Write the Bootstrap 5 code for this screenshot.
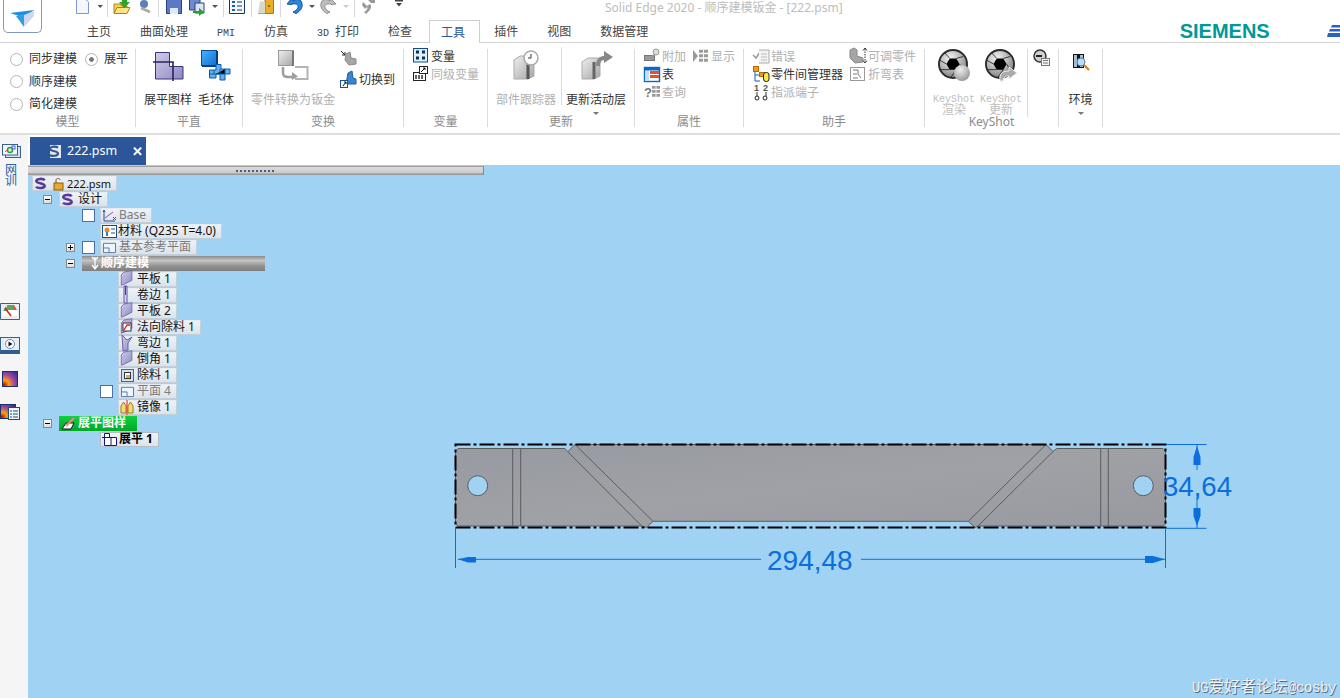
<!DOCTYPE html>
<html lang="zh">
<head>
<meta charset="utf-8">
<title>Solid Edge 2020</title>
<link rel="stylesheet" href="https://cdn.jsdelivr.net/npm/bootstrap@5.3.0/dist/css/bootstrap.min.css">
<style>
html,body{height:698px;overflow:hidden;background:#fff}
body{font-family:"Noto Sans","Noto Sans CJK SC",sans-serif;font-size:12px;line-height:16px;color:#333}
svg{display:block;overflow:visible;flex:none}
.defs{position:absolute;width:0;height:0}
.mono{font-family:"Liberation Mono","Noto Sans CJK SC",monospace;font-size:10px}
.top{height:43px;border-bottom:1px solid #d2d2d2;flex:none}
.appcol{width:72px;padding-left:3px;flex:none}
.appbtn{width:39px;height:33px;border:1px solid #7f98c4;border-top:0;border-radius:0 0 5px 5px;background:#fff}
.qat{height:20px}
.qs{width:1px;height:17px;background:#d9d9d9;flex:none}
.wintitle{margin-left:195px;color:#bdbdbd;line-height:15px;white-space:nowrap}
.rt{flex:none;margin-left:.5px}
.rt .nav-link{padding:0 14.5px;height:23px;line-height:24px;color:#444;font-size:12px;border:0;border-radius:0;background:none;white-space:nowrap}
.rt .nav-link.active{margin-left:2px;padding:0 13.5px 0 11.5px;height:23px;border:1px solid #cfcfcf;border-bottom:0;background:#fff;color:#2b579a;position:relative;z-index:2;box-shadow:0 1px 0 #fff}
.siemens{font-family:"Liberation Sans",sans-serif;font-weight:700;font-size:20px;line-height:22px;color:#009999;margin-left:517px;flex:none}
.menu-ic{margin-left:57px}
.ribbon{height:92px;border-bottom:2px solid #dedede;flex:none}
.rg{margin-top:6px;height:78px;border-right:1px solid #dcdcdc;flex:none;display:flex;flex-direction:column}
.rb{height:65px;display:flex;flex:none}
.gl{height:16px;line-height:16px;text-align:center;color:#8b8b8b;white-space:nowrap;flex:none}
.g1{width:136px}.g2{width:107px}.g3{width:161px}.g4{width:84px}.g5{width:147px}.g6{width:109px}.g7{width:181px}.g8{width:134px}.g9{width:44px}
.g1 .rb{padding-left:10px;flex-direction:column;margin-top:-1px;height:66px}
.g2 .rb,.g3 .rb,.g5 .rb,.g8 .rb{padding-left:8px}
.g4 .rb,.g6 .rb,.g7 .rb{padding-left:9px;flex-direction:column;margin-top:-1px;height:66px}
.g7 .rb{flex-direction:row}
.radio-row{height:22.5px;display:flex;align-items:center;white-space:nowrap;flex:none}
.radio-row .form-check-input{width:13px;height:13px;margin:0 6px 0 0;border:1px solid #b4b4b4;background:#fff;box-shadow:none;flex:none}
.radio-row .form-check-input:checked{background:radial-gradient(circle,#777 0 2px,#fff 2.6px)}
.radio-row .second{margin-left:8px}
.lb{display:flex;flex-direction:column;align-items:center;white-space:nowrap}
.lb svg{margin-bottom:1px}
.lb span{line-height:16px}
.caretb{width:0;height:0;border:3px solid transparent;border-top:3px solid #777;border-bottom:0;margin-top:4px}
.ml6{margin-left:6px}
.col-right{margin-left:5px;padding-top:1px}
.col-right .rw{margin-top:4px}
.rw{height:18px;display:flex;align-items:center;white-space:nowrap}
.rw svg{margin-bottom:2px}
.tx{margin-left:2px}
.off{color:#b0b0b0}
.gapl{margin-left:7px}
.c97{width:97px}
.isep{width:1px;background:#dcdcdc;flex:none}
.isep.s1{height:58px;margin:-2px 4px 0 5px}
.isep.s2{height:68px;margin:0 5px}
.ks{width:42px}
.ks .mono{line-height:10px;margin-top:3px;color:#bdbdbd}
.ks .cj{line-height:10px;color:#bdbdbd}
.ml5{margin-left:5px}
.work{flex:1 1 auto;min-height:0}
.rail{width:28px;background:#f5f5f5;flex:none;padding-top:8px;display:flex;flex-direction:column;align-items:flex-start}
.rail .vt{margin:4px 0 0 5px;line-height:11px;color:#2b5f9e;font-size:12px}
.r1{margin-left:2px}
.sp1{margin-top:117px}.sp2{margin-top:17px}
.docbar{height:30px;background:#fff;padding:2px 0 0 2px;flex:none}
.doctab{width:116px;height:28px;background:#2b579a;color:#fff;padding-left:17px;display:flex;align-items:center;font-size:13px}
.doctab .nm{margin-left:5px;width:65px;font-size:12.5px}
.canvas{flex:1 1 auto;position:relative;background:#a0d2f4;overflow:hidden}
.dwg{position:absolute;left:0;top:0}
.treepane{position:relative;z-index:1;width:456px}
.splitter{height:9px;margin-top:1px;background:linear-gradient(#7a7a7a 0,#d9d9d9 15%,#cfcfcf 70%,#8a8a8a 100%);border-right:1px solid #888;display:flex;align-items:center}
.grip{margin-left:208px;width:40px;height:2px;background:repeating-linear-gradient(90deg,#4a5f80 0 2px,transparent 2px 4px)}
.tree{padding:1px 0 0 4px}
.tn{height:16px;display:flex;align-items:center;white-space:nowrap;color:#1a1a1a}
.tn.first{height:15px}
.ind1{padding-left:11px}.ind2{padding-left:34px}.ind3{padding-left:50px}.ind4{padding-left:86px}.ind5{padding-left:68px}.ind6{padding-left:68px}
.xp{width:9px;height:9px;border:1px solid #888;background:linear-gradient(#fff,#ddd);display:flex;flex:none;margin-right:7px}
.ck.form-check-input{width:13px;height:13px;margin:0 5px 0 0;border:1px solid #4f6fa0;border-radius:0;background:#fff;flex:none;box-shadow:none}
.pill{height:15px;display:flex;align-items:center;padding:0 5px 0 1px;background:linear-gradient(#edf2f6,#dbe4eb);border:1px solid #c3d0da;border-top-color:#e6edf2;color:#111;font-size:12px;line-height:14px}
.pill .lbl{margin-left:2px}
.ind4 .pill .lbl{margin-left:3px}
.ind1 .pill .lbl{margin-left:3px}
.ind5 .pill .lbl{margin-left:1px}
.first .pill .lbl{margin-left:3px;font-size:11px}
.pill.ghost{color:#7c7c7c}
.pill.sel{width:183px;border:0;background:linear-gradient(#8b8b8b,#c4c4c4 30%,#8e8e8e 70%,#7f7f7f);color:#fff;font-weight:700;padding-left:9px}
.ind1 .pill.green{width:78px;border:0;background:linear-gradient(#10d040,#00a828);color:#fff;font-weight:700;padding-left:2px}
.ind1 .pill.green .lbl{margin-left:2px}
.pill.bold{font-weight:700;color:#000;border-color:#b2bec8}
.ind5 .pill.bold .lbl{margin-left:2px}
.wm{position:absolute;right:4px;bottom:1px;z-index:1;font-size:16px;line-height:18px;color:#eef3f8;text-shadow:1px 1px 0 #5e6a78;font-family:"Liberation Serif","Noto Sans CJK SC",serif;white-space:nowrap}
.wm b{font-family:"Liberation Mono",monospace;font-size:14px;font-weight:400;letter-spacing:-.4px}
</style>
</head>
<body class="d-flex flex-column">
<svg class="defs" aria-hidden="true">
<defs>
<linearGradient id="gCube" x1="0" y1="0" x2="1" y2="1"><stop offset="0" stop-color="#efefef"/><stop offset="1" stop-color="#a5a5a5"/></linearGradient>
<linearGradient id="gPur" x1="0" y1="0" x2="1" y2="1"><stop offset="0" stop-color="#cfcdea"/><stop offset="1" stop-color="#8e89c2"/></linearGradient>
<linearGradient id="gBlue" x1="0" y1="0" x2="1" y2="1"><stop offset="0" stop-color="#45b4ff"/><stop offset="1" stop-color="#0f6fd0"/></linearGradient>
<linearGradient id="gPart" x1="0" y1="0" x2="1" y2="1"><stop offset="0" stop-color="#979aa2"/><stop offset=".5" stop-color="#a0a1a6"/><stop offset="1" stop-color="#989aa1"/></linearGradient>
<radialGradient id="gKs" cx=".4" cy=".3" r=".8"><stop offset="0" stop-color="#f4f4f4"/><stop offset=".6" stop-color="#a8a8a8"/><stop offset="1" stop-color="#666"/></radialGradient>
<radialGradient id="gBall" cx=".4" cy=".3" r=".8"><stop offset="0" stop-color="#eee"/><stop offset="1" stop-color="#8e8e8e"/></radialGradient>
<radialGradient id="gHeat" cx=".1" cy=".9" r="1.1"><stop offset="0" stop-color="#d40000"/><stop offset=".3" stop-color="#f7a400"/><stop offset=".6" stop-color="#b04a9a"/><stop offset="1" stop-color="#3d2f9a"/></radialGradient>
<symbol id="sLogo" viewBox="0 0 14 14" overflow="visible"><path d="M11.500 3.500C10 1.500 3 1.500 2.500 4.200 2 7 11.500 6.500 11.500 9.500 11.500 12.500 4 12.500 2.200 10.500" fill="none" stroke="#5b3a96" stroke-width="2.800"/></symbol>
<symbol id="sSheet" viewBox="0 0 16 16" overflow="visible"><path d="M4-1 14-3V9L4 14 1 15V2Z" fill="url(#gPur)" stroke="#6a62ac"/></symbol>
<symbol id="sPlane" viewBox="0 0 16 14" overflow="visible"><path d="M1.500 2.500H14.500V12.500H1.500ZM1.500 7.500H7.500V12.500" fill="#eef4fa" stroke="#4e74ad"/></symbol>
<symbol id="sGrid" viewBox="0 0 10 14"><path d="M0 0H10V3.500H0ZM0 5H10V8.500H0ZM0 10H10V13.500H0Z" fill="#9a9a9a"/><path d="M5 0V14" stroke="#fff"/></symbol>
<symbol id="sKs" viewBox="0 0 32 32" overflow="visible"><circle cx="16" cy="16" r="15" fill="url(#gKs)" stroke="#2a2a2a" stroke-width="2"/><path d="M9 16 12.500 10H19.500L23 16 19.500 22H12.500Z" fill="#000"/><path d="M12.500 10 7 4M19.500 10 27 8M23 16 28 24M19.500 22 14 30M12.500 22 3 22M9 16 2 12" stroke="#222" stroke-width=".9"/></symbol>
</defs>
</svg>

<header class="top d-flex">
  <div class="appcol">
    <div class="appbtn"><svg width="37" height="32" viewBox="4 0 37 32"><path d="M10 13 34 10 27 15 19 16Z" fill="#1f8fe0"/><path d="M16 16 24 15 24 27Z" fill="#2e9ce8"/><path d="M24 15 34 11 34 16 24 27Z" fill="#cfd6f0"/></svg></div>
  </div>
  <div class="flex-grow-1">
    <div class="qat d-flex align-items-start">
      <svg width="35" height="20" viewBox="72 0 35 20"><path d="M76.500-2H84L88.500 2V13.500H76.500Z" fill="#f4f7fd" stroke="#7c9ad0"/><path d="M97.500 5H103L100.250 8Z" fill="#555"/></svg>
      <span class="qs"></span>
      <svg width="50" height="20" viewBox="108 0 50 20"><path d="M114 13V4H120L122 6H127V13Z" fill="#f7d35c" stroke="#a98618"/><path d="M114 13.500 117 7.500H130L127 13.500Z" fill="#ffe382" stroke="#a98618"/><path d="M122-2H127V2H130L124.500 8 119 2H122Z" fill="#2aa52a"/><circle cx="144" cy="4" r="4" fill="#5b80b8"/><path d="M141 8 150 12" stroke="#aaa" stroke-width="3"/></svg>
      <span class="qs"></span>
      <svg width="64" height="20" viewBox="159 0 64 20"><path d="M166.500-2H181.500V13.500H166.500Z" fill="#5d79c3" stroke="#2b3f87"/><rect x="170" y="8" width="8" height="6" fill="#dfe8f8"/><path d="M189.500-2H200V10H189.500Z" fill="#6e89cc" stroke="#2b3f87"/><path d="M195 3H204V13H195Z" fill="#dbe4f7" stroke="#2b3f87"/><path d="M193 11H199V8L204 12 199 16V13H193Z" fill="#26a326"/><path d="M212 5H218L215 8Z" fill="#555"/></svg>
      <span class="qs"></span>
      <svg width="27" height="20" viewBox="224 0 27 20"><path d="M229.500-2H244.500V13.500H229.500Z" fill="#f4f8fc" stroke="#17375e"/><path d="M232 2H235M232 6H235M232 10H235" stroke="#1563b5" stroke-width="2"/><path d="M237 2H242M237 6H242M237 10H242" stroke="#17375e"/></svg>
      <span class="qs"></span>
      <svg width="28" height="20" viewBox="252 0 28 20"><path d="M258 13.500H273.500V-2H265V13.500" fill="#e8ae2a" stroke="#a67a12"/><path d="M258 13.500H265V2L260 1Z" fill="#d8d8c8"/><circle cx="269" cy="6" r="1" fill="#7a5a0a"/></svg>
      <span class="qs"></span>
      <svg width="73" height="20" viewBox="281 0 73 20"><path d="M292-2 287 4 291 4.500C295 3 299 4 298 8 297 10 295 11 293 12L296 13.500C301 11 304 6 301 1 299-1 296-1 293 1Z" fill="#2f87dc" stroke="#0d4f9c"/><path d="M309 5H315L312 8Z" fill="#555"/><path d="M330-2 336 4 332 4.500C328 3 324 4 325 8 326 10 328 11 330 12L327 13.500C322 11 319 6 322 1 324-1 327-1 330 1Z" fill="#bdbdbd" stroke="#8e8e8e"/><path d="M343 5H349L346 8Z" fill="#ccc"/></svg>
      <span class="qs"></span>
      <svg width="55" height="20" viewBox="355 0 55 20"><path d="M363 2 367 6 370 4C372 6 371 9 369 11L366 14 364 12C367 10 368 8 367 7L365 9 362 5ZM367-1 375-1 375 3 371 3Z" fill="#9a9a9a"/><path d="M395 0H403V1.500H395ZM396 3H402L399 6.500Z" fill="#444"/></svg>
      <div class="wintitle">Solid Edge 2020 - 顺序建模钣金 - [222.psm]</div>
    </div>
    <div class="d-flex align-items-start">
      <ul class="nav rt flex-nowrap">
        <li class="nav-item"><a class="nav-link" href="#">主页</a></li>
        <li class="nav-item"><a class="nav-link" href="#">曲面处理</a></li>
        <li class="nav-item"><a class="nav-link" href="#"><span class="mono">PMI</span></a></li>
        <li class="nav-item"><a class="nav-link" href="#">仿真</a></li>
        <li class="nav-item"><a class="nav-link" href="#"><span class="mono">3D </span>打印</a></li>
        <li class="nav-item"><a class="nav-link" href="#">检查</a></li>
        <li class="nav-item"><a class="nav-link active" href="#">工具</a></li>
        <li class="nav-item"><a class="nav-link" href="#">插件</a></li>
        <li class="nav-item"><a class="nav-link" href="#">视图</a></li>
        <li class="nav-item"><a class="nav-link" href="#">数据管理</a></li>
      </ul>
      <span class="siemens">SIEMENS</span>
      <svg class="menu-ic" width="14" height="18" viewBox="1326 20 14 18"><path d="M1331 25H1340V27.500H1330ZM1329 29H1340V31.500H1328ZM1327 33H1340V37H1326Z" fill="#2a62c4"/></svg>
    </div>
  </div>
</header>

<section class="ribbon d-flex">
  <div class="rg g1">
    <div class="rb">
      <div class="radio-row"><input class="form-check-input" type="radio" name="m"><span>同步建模</span><input class="form-check-input second" type="radio" name="m" checked><span>展平</span></div>
      <div class="radio-row"><input class="form-check-input" type="radio" name="m2"><span>顺序建模</span></div>
      <div class="radio-row"><input class="form-check-input" type="radio" name="m3"><span>简化建模</span></div>
    </div>
    <div class="gl">模型</div>
  </div>
  <div class="rg g2">
    <div class="rb">
      <div class="lb"><svg width="48" height="42" viewBox="144 49 48 42"><path d="M155.500 52.500H169.500V66.500H183V79H173V79H155.500Z" fill="url(#gPur)" stroke="#3a3580"/><path d="M153 62H173V81" fill="none" stroke="#2a235f" stroke-width="1.600"/></svg><span>展平图样</span></div>
      <div class="lb ml6"><svg width="36" height="42" viewBox="198 49 36 42"><rect x="201.500" y="50.500" width="15" height="15" fill="url(#gBlue)" stroke="#0c4a92"/><path d="M217 51V66H202" fill="none" stroke="#0a3d78" stroke-width="2"/><path d="M216 64.500H221V69H230V74H225V80H220V74H216V78H209.500V70H216Z" fill="#63b0f0" stroke="#0c5aa6"/><path d="M214 70V74M220 69V74M225 69V74H216M209 74H216" stroke="#0c5aa6"/></svg><span>毛坯体</span></div>
    </div>
    <div class="gl">平直</div>
  </div>
  <div class="rg g3">
    <div class="rb">
      <div class="lb off"><svg width="84" height="42" viewBox="251 49 84 42"><rect x="278.500" y="50.500" width="15" height="15" fill="url(#gCube)" stroke="#9a9a9a"/><path d="M293 51V66" stroke="#777" stroke-width="2"/><path d="M283 67V73C283 76 285 77 288 77H293" fill="none" stroke="#9d9d9d" stroke-width="2.500"/><path d="M292 72 298 76.500 292 80Z" fill="#9d9d9d"/><path d="M295 67H307.500V79H295" fill="none" stroke="#b3b3b3" stroke-width="2"/></svg><span>零件转换为钣金</span></div>
      <div class="col-right">
        <svg width="17" height="17" viewBox="340 50 17 17"><path d="M341 51 345 55M345 52V55H342" fill="none" stroke="#222"/><path d="M346 54 350 52 351 58 356 59V64L349 65 345 60Z" fill="#a6a6a6" stroke="#8a8a8a"/></svg>
        <div class="rw"><svg width="17" height="17" viewBox="341 71 17 17"><path d="M349 73 353 71 354 78 357 79V84H347Z" fill="#3d84cc" stroke="#1f5ea6"/><rect x="341.500" y="80.500" width="7" height="7" fill="#fff" stroke="#1f4f96"/><path d="M344 86 347 82M345 82H347V84" stroke="#111" fill="none"/></svg><span class="tx">切换到</span></div>
      </div>
    </div>
    <div class="gl">变换</div>
  </div>
  <div class="rg g4">
    <div class="rb">
      <div class="rw"><svg width="16" height="18" viewBox="413 47 16 18"><rect x="413.500" y="48.500" width="14" height="13.500" fill="#dff0fb" stroke="#0f4c8a"/><path d="M416 52H419M416 58H419M422 52H425M422 58H425" stroke="#0f2f55" stroke-width="3"/></svg><span class="tx">变量</span></div>
      <div class="rw off"><svg width="16" height="18" viewBox="413 65 16 18"><rect x="413.500" y="72.500" width="12" height="8" fill="#fff" stroke="#222"/><rect x="419.500" y="66.500" width="8" height="7" fill="#fff" stroke="#222"/><path d="M421 72 425 68M423 68H425V70" fill="none" stroke="#111"/><path d="M416 75V79M419 75V79M422 75V79" stroke="#333" stroke-width="1.500"/></svg><span class="tx">同级变量</span></div>
    </div>
    <div class="gl">变量</div>
  </div>
  <div class="rg g5">
    <div class="rb">
      <div class="lb off"><svg width="60" height="42" viewBox="496 49 60 42"><path d="M514 60 520 56H534V76L528 79H514Z" fill="url(#gCube)" stroke="#aaa"/><path d="M528 60V79" stroke="#555" stroke-width="3"/><circle cx="531" cy="58" r="7" fill="#fff" stroke="#aaa" stroke-width="1.500"/><path d="M531 54V58H528" fill="none" stroke="#333"/></svg><span>部件跟踪器</span></div>
      <span class="isep s1"></span>
      <div class="lb"><svg width="60" height="42" viewBox="566 49 60 42"><path d="M582 62 588 58H600V76L594 79H582Z" fill="url(#gCube)" stroke="#aaa"/><path d="M594 62V79" stroke="#666" stroke-width="3"/><path d="M596 66C596 58 601 56 604 56V51L613 57 604 63V60C601 60 600 63 600 66Z" fill="#888"/></svg><span>更新活动层</span><i class="caretb"></i></div>
    </div>
    <div class="gl">更新</div>
  </div>
  <div class="rg g6">
    <div class="rb">
      <div class="rw"><svg class="off" width="16" height="18" viewBox="644 47 16 18"><rect x="644.500" y="55.500" width="10" height="5" fill="#9a9a9a" stroke="#777"/><circle cx="656" cy="52" r="3" fill="#ddd" stroke="#999"/><path d="M654 55 651 58" stroke="#999" stroke-width="2"/></svg><span class="tx off">附加</span><svg class="gapl" width="16" height="18" viewBox="693 47 16 18"><path d="M693 50 698 56 693 62Z" fill="#9a9a9a"/><use href="#sGrid" x="699" y="49" width="9" height="14"/></svg><span class="tx off">显示</span></div>
      <div class="rw"><svg width="16" height="18" viewBox="644 65 16 18"><rect x="644.500" y="67.500" width="15" height="14" fill="#fff" stroke="#0c66c4" stroke-width="1.400"/><rect x="645" y="68" width="14" height="2.500" fill="#0c66c4"/><path d="M650 71H659V74H650ZM650 75H659V78H650Z" fill="#e2542a"/><path d="M645 71H649V81H645Z" fill="#bfe0f7"/></svg><span class="tx">表</span></div>
      <div class="rw off"><svg width="16" height="18" viewBox="644 83 16 18"><text x="644" y="97" font-size="13" font-weight="700" fill="#777" font-family="Liberation Sans">?</text><use href="#sGrid" x="652" y="85" width="8" height="13"/></svg><span class="tx">查询</span></div>
    </div>
    <div class="gl">属性</div>
  </div>
  <div class="rg g7">
    <div class="rb">
      <div class="c97">
        <div class="rw off"><svg width="16" height="18" viewBox="753 47 16 18"><path d="M753 55 756 58 760 52" fill="none" stroke="#999" stroke-width="1.500"/><path d="M759 50H769V63H759" fill="#f3f3f3" stroke="#aaa"/><path d="M761 54H767M761 57H767M761 60H767" stroke="#bbb"/></svg><span class="tx">错误</span></div>
        <div class="rw"><svg width="16" height="18" viewBox="753 65 16 18"><path d="M755 70V81H760M755 75H760" fill="none" stroke="#0a62b8"/><rect x="753.500" y="66.500" width="5" height="5" fill="#f29a1c" stroke="#b86a00"/><rect x="759.500" y="72.500" width="5" height="4" fill="#f29a1c" stroke="#b86a00"/><rect x="763.500" y="72.500" width="5.500" height="9" rx="2.500" fill="#ffe84a" stroke="#222"/></svg><span class="tx">零件间管理器</span></div>
        <div class="rw off"><svg width="16" height="18" viewBox="753 83 16 18"><text x="754" y="91" font-size="9" font-weight="700" fill="#555" font-family="Liberation Sans">1</text><text x="763" y="91" font-size="9" font-weight="700" fill="#555" font-family="Liberation Sans">2</text><path d="M757 92V96M766 92V96" stroke="#333"/><circle cx="757" cy="98" r="2" fill="#fff" stroke="#222"/><circle cx="765" cy="98" r="2" fill="#fff" stroke="#222"/></svg><span class="tx">指派端子</span></div>
      </div>
      <div>
        <div class="rw off"><svg width="16" height="18" viewBox="850 47 16 18"><path d="M850 50 854 48 857 50V56L863 58V62L855 63 850 58Z" fill="#a5a5a5" stroke="#8a8a8a"/><path d="M865 49V62" stroke="#333" stroke-dasharray="1.500 1"/><path d="M863 50.500 865 48 867 50.500M863 60.500 865 63 867 60.500" fill="none" stroke="#333"/></svg><span class="tx">可调零件</span></div>
        <div class="rw off"><svg width="16" height="18" viewBox="850 65 16 18"><rect x="850.500" y="67.500" width="14" height="13" fill="#fff" stroke="#999"/><path d="M853 70H858V74L861 78M853 74H857M853 78H858" fill="none" stroke="#777"/></svg><span class="tx">折弯表</span></div>
      </div>
    </div>
    <div class="gl">助手</div>
  </div>
  <div class="rg g8">
    <div class="rb">
      <div class="lb ks"><svg width="42" height="42" viewBox="933 49 42 42"><use href="#sKs" x="938" y="49" width="30" height="30"/><circle cx="962" cy="73" r="8" fill="url(#gBall)"/></svg><span class="mono">KeyShot</span><span class="cj">渲染</span></div>
      <div class="lb ks ml5"><svg width="42" height="42" viewBox="980 49 42 42"><use href="#sKs" x="985" y="49" width="30" height="30"/><path d="M1000 81C999 73 1003 71 1009 71V67L1017 73 1009 79V76C1005 76 1003 78 1003 81Z" fill="#aaa" stroke="#eee"/></svg><span class="mono">KeyShot</span><span class="cj">更新</span></div>
      <span class="isep s2"></span>
      <svg width="18" height="18" viewBox="1033 49 18 18"><circle cx="1040" cy="56" r="6" fill="#cfcfcf" stroke="#333" stroke-width="1.500"/><path d="M1036 56H1042" stroke="#222" stroke-width="2"/><rect x="1041.500" y="58.500" width="8" height="7" fill="#f3f3f3" stroke="#777"/><path d="M1043 60.500H1048M1043 63H1048" stroke="#777"/></svg>
    </div>
    <div class="gl">KeyShot</div>
  </div>
  <div class="rg g9">
    <div class="rb justify-content-center">
      <div class="lb"><svg width="28" height="42" viewBox="1068 49 28 42"><rect x="1074" y="54" width="11" height="14" fill="#16161a"/><path d="M1076.500 55V67M1082.500 55V67" stroke="#a9bcd4" stroke-width="3"/><circle cx="1082" cy="62" r="4" fill="#bfdcf2" stroke="#4e7ca8"/><path d="M1085 65 1090 70" stroke="#d8781c" stroke-width="2"/></svg><span>环境</span><i class="caretb"></i></div>
    </div>
  </div>
</section>

<main class="work d-flex">
  <aside class="rail">
    <svg class="r1" width="19" height="17" viewBox="2 143 19 17"><rect x="5.500" y="146.500" width="15" height="11" fill="#d7e4f2" stroke="#37618f"/><rect x="2.500" y="144.500" width="15" height="10.500" fill="#f2f7fc" stroke="#37618f"/><circle cx="10" cy="150" r="2.500" fill="none" stroke="#2ca02c" stroke-width="1.500"/><path d="M5 152 8 149" stroke="#d44"/><rect x="12" y="146" width="3" height="3" fill="none" stroke="#46c"/></svg>
    <div class="vt">网<br>训</div>
    <svg class="sp1" width="21" height="17" viewBox="1 304 21 17"><path d="M1.500 304.500H20.500V320.500H1.500Z" fill="#e9eef4" stroke="#37618f"/><path d="M3 317C3 310 7 306 11 306 15 306 19 310 19 317Z" fill="#fff"/><path d="M4 312 7 307 9 312ZM8 306H11V311H8ZM11 306H15V311H11Z" fill="#5aa85a"/><path d="M15 306 18 311H14Z" fill="#e0543a"/><path d="M6 309 12 317" stroke="#d21" stroke-width="1.600"/></svg>
    <svg class="sp2" width="21" height="17" viewBox="1 337 21 17"><rect x="1.500" y="337.500" width="19" height="16" fill="#e6edf4" stroke="#37618f"/><circle cx="11" cy="344" r="4.500" fill="#fff" stroke="#6d8aac"/><path d="M9.500 341.500 13.500 344 9.500 346.500Z" fill="#111"/><rect x="2" y="350" width="18" height="3.500" fill="#2f5d93"/></svg>
    <svg class="sp2 r1" width="16" height="16" viewBox="3 371 16 16"><rect x="3.500" y="371.500" width="15" height="15" fill="url(#gHeat)" stroke="#1a2f6b"/></svg>
    <svg class="sp2" width="21" height="17" viewBox="1 405 21 17"><rect x="1.500" y="405.500" width="15" height="14" fill="url(#gHeat)" stroke="#1a2f6b"/><rect x="9.500" y="408.500" width="11" height="12" fill="#f3f8fc" stroke="#1d4b85"/><path d="M11 412H13M11 415H13M11 418H13M14 412H19M14 415H19M14 418H19" stroke="#1d4b85"/></svg>
  </aside>
  <div class="d-flex flex-column flex-grow-1">
    <div class="docbar">
      <div class="doctab"><svg width="15" height="15" viewBox="0 0 15 15"><path d="M3 1H14V14H3Z" fill="#e8e8e8"/><path d="M11 3.500C8 2 3 2.500 3 5 3 7.500 11 6.500 11 9.500 11 12 5 12.500 2 11" fill="none" stroke="#2b579a" stroke-width="2.200"/></svg><span class="nm">222.psm</span><span class="fw-bold">✕</span></div>
    </div>
    <div class="canvas">
      <svg class="dwg" width="1312" height="533" viewBox="28 165 1312 533">
        <path d="M458 448.500H565L567.700 451.700 575 444.500H1046L1053 451.500 1056.700 448.500H1163L1165.500 451V524L1163 526H978L975 527.500 968.300 521.300H653L646.700 527.500 641.700 526H458L455.500 523.500V451Z" fill="url(#gPart)" stroke="#5c5c5c"/>
        <path d="M567.700 451.700 641.700 526M575 444.500 653 521.300M1046 444.500 968.300 521.300M1053 451.500 978 526M512.700 448.500V526M520.700 448.500V526M1100.700 448.500V526M1108.300 448.500V526" fill="none" stroke="#5c5c5c"/>
        <circle cx="477.700" cy="485.700" r="10" fill="#a0d2f4" stroke="#5c5c5c"/>
        <circle cx="1143.300" cy="485.700" r="10" fill="#a0d2f4" stroke="#5c5c5c"/>
        <rect x="455.500" y="444.500" width="710" height="83" fill="none" stroke="#000" stroke-width="2" stroke-dasharray="15 3 3 3"/>
        <path d="M455.500 528V568M1165.500 528V568M458 559.300H761M861 559.300H1165M1166 444.500H1206.500M1166 528.300H1206.500M1197 444.500V470M1197 496V528" fill="none" stroke="#0a6fdc"/>
        <path d="M458 559.300 468 557H476V562.500H468ZM1165 559.300 1153 556H1145V563H1153ZM1197 446 1193.500 457V465H1200.500V457ZM1197 526 1193.500 516V508H1200.500V516Z" fill="#0a6fdc"/>
        <text x="767" y="570" font-family="Liberation Sans" font-size="28" fill="#0a6fdc">294,48</text>
        <text x="1163" y="496" font-family="Liberation Sans" font-size="27" fill="#0a6fdc" textLength="69" lengthAdjust="spacingAndGlyphs">34,64</text>
      </svg>
      <div class="treepane">
        <div class="splitter"><span class="grip"></span></div>
        <div class="tree">
          <div class="tn first"><div class="pill"><svg width="13" height="13"><use href="#sLogo" width="13" height="13"/></svg><svg class="ml6" width="11" height="12" viewBox="0 0 11 12"><path d="M3 5V2C3 0 7 0 7 2" fill="none" stroke="#a33"/><rect x="1" y="5" width="9" height="7" fill="#e8a82a" stroke="#8a6208"/></svg><span class="lbl">222.psm</span></div></div>
          <div class="tn ind1"><span class="xp"><svg width="7" height="7"><path d="M1 3.500H6" stroke="#000"/></svg></span><div class="pill"><svg width="14" height="13"><use href="#sLogo" width="13" height="13"/></svg><span class="lbl">设计</span></div></div>
          <div class="tn ind3"><input class="form-check-input ck" type="checkbox"><div class="pill ghost"><svg width="15" height="13" viewBox="0 0 15 13"><path d="M2 12V2M2 12H13" stroke="#1c4f9c"/><path d="M1 3 2 1 3 3" stroke="#1c4f9c" fill="none"/><path d="M3 9 11 3" stroke="#c23a9c"/><path d="M11 8 14 11M14 8 11 11" stroke="#555"/></svg><span class="lbl">Base</span></div></div>
          <div class="tn ind5"><div class="pill"><svg width="15" height="13" viewBox="0 0 15 13"><rect x=".5" y=".5" width="14" height="12" fill="#fff" stroke="#16508f"/><circle cx="5" cy="5" r="2.500" fill="#e88a2a"/><path d="M5 7V11" stroke="#3a7ac4" stroke-width="2"/><path d="M9 4H13M9 8H13" stroke="#16508f"/></svg><span class="lbl">材料 (Q235 T=4.0)</span></div></div>
          <div class="tn ind2"><span class="xp"><svg width="7" height="7"><path d="M1 3.500H6M3.500 1V6" stroke="#000"/></svg></span><input class="form-check-input ck" type="checkbox"><div class="pill ghost"><svg width="15" height="13"><use href="#sPlane" width="15" height="13"/></svg><span class="lbl">基本参考平面</span></div></div>
          <div class="tn ind2"><span class="xp"><svg width="7" height="7"><path d="M1 3.500H6" stroke="#000"/></svg></span><div class="pill sel"><svg width="8" height="14" viewBox="0 0 8 14"><path d="M1 1 4 4 7 1M1 9 4 13 7 9M4 1V13" fill="none" stroke="#fff" stroke-width="1.300"/></svg><span class="lbl">顺序建模</span></div></div>
          <div class="tn ind4"><div class="pill"><svg width="14" height="13"><use href="#sSheet" width="14" height="13"/></svg><span class="lbl">平板 1</span></div></div>
          <div class="tn ind4"><div class="pill"><svg width="14" height="13" viewBox="0 0 14 13"><path d="M4-3H7V14H4Z" fill="#d8d5f0" stroke="#5f56a8"/><path d="M5.500-3V6" stroke="#4a4294"/></svg><span class="lbl">卷边 1</span></div></div>
          <div class="tn ind4"><div class="pill"><svg width="14" height="13"><use href="#sSheet" width="14" height="13"/></svg><span class="lbl">平板 2</span></div></div>
          <div class="tn ind4"><div class="pill"><svg width="14" height="13" viewBox="0 0 14 13"><use href="#sSheet" width="14" height="13"/><rect x="3" y="2" width="8" height="8" fill="#fff" stroke="#333"/><path d="M4 9 7 4H10" fill="none" stroke="#d22" stroke-width="1.400"/></svg><span class="lbl">法向除料 1</span></div></div>
          <div class="tn ind4"><div class="pill"><svg width="14" height="13" viewBox="0 0 14 13"><path d="M2-2 7 3 12 0 8 6V13L3 14Z" fill="url(#gPur)" stroke="#6a62ac"/></svg><span class="lbl">弯边 1</span></div></div>
          <div class="tn ind4"><div class="pill"><svg width="14" height="13"><use href="#sSheet" width="14" height="13"/></svg><span class="lbl">倒角 1</span></div></div>
          <div class="tn ind4"><div class="pill"><svg width="14" height="13" viewBox="0 0 14 13"><rect x="1.500" y=".5" width="12" height="12" fill="#cfe0f2" stroke="#3a6aa8"/><rect x="4.500" y="3.500" width="6" height="6" fill="#fff" stroke="#334"/><rect x="6" y="6" width="4" height="3" fill="#e3ad2d"/></svg><span class="lbl">除料 1</span></div></div>
          <div class="tn ind6"><input class="form-check-input ck" type="checkbox"><div class="pill ghost"><svg width="15" height="13"><use href="#sPlane" width="15" height="13"/></svg><span class="lbl">平面 4</span></div></div>
          <div class="tn ind4"><div class="pill"><svg width="14" height="13" viewBox="0 0 14 13"><path d="M1 12V5L3.500 1 6 5V12ZM8 12V5L10.500 1 13 5V12Z" fill="#f6d978" stroke="#a37d10"/><path d="M7-1V14" stroke="#d22"/></svg><span class="lbl">镜像 1</span></div></div>
          <div class="tn ind1"><span class="xp"><svg width="7" height="7"><path d="M1 3.500H6" stroke="#000"/></svg></span><div class="pill green"><svg width="15" height="13" viewBox="0 0 15 13"><path d="M1 12 5 6H13L10 12Z" fill="#fff" stroke="#113"/><path d="M5 9 13 1" stroke="#e88" stroke-width="2"/></svg><span class="lbl">展平图样</span></div></div>
          <div class="tn ind5"><div class="pill bold"><svg width="15" height="13" viewBox="0 0 15 13"><path d="M2.500.5H7.500V4.500H14.500V12.500H2.500Z" fill="#fff" stroke="#16167a"/><path d="M0 4.500H9V13" fill="none" stroke="#16167a"/></svg><span class="lbl">展平 1</span></div></div>
        </div>
      </div>
      <div class="wm"><b>UG</b>爱好者论坛<b>@cosby</b></div>
    </div>
  </div>
</main>
</body>
</html>
